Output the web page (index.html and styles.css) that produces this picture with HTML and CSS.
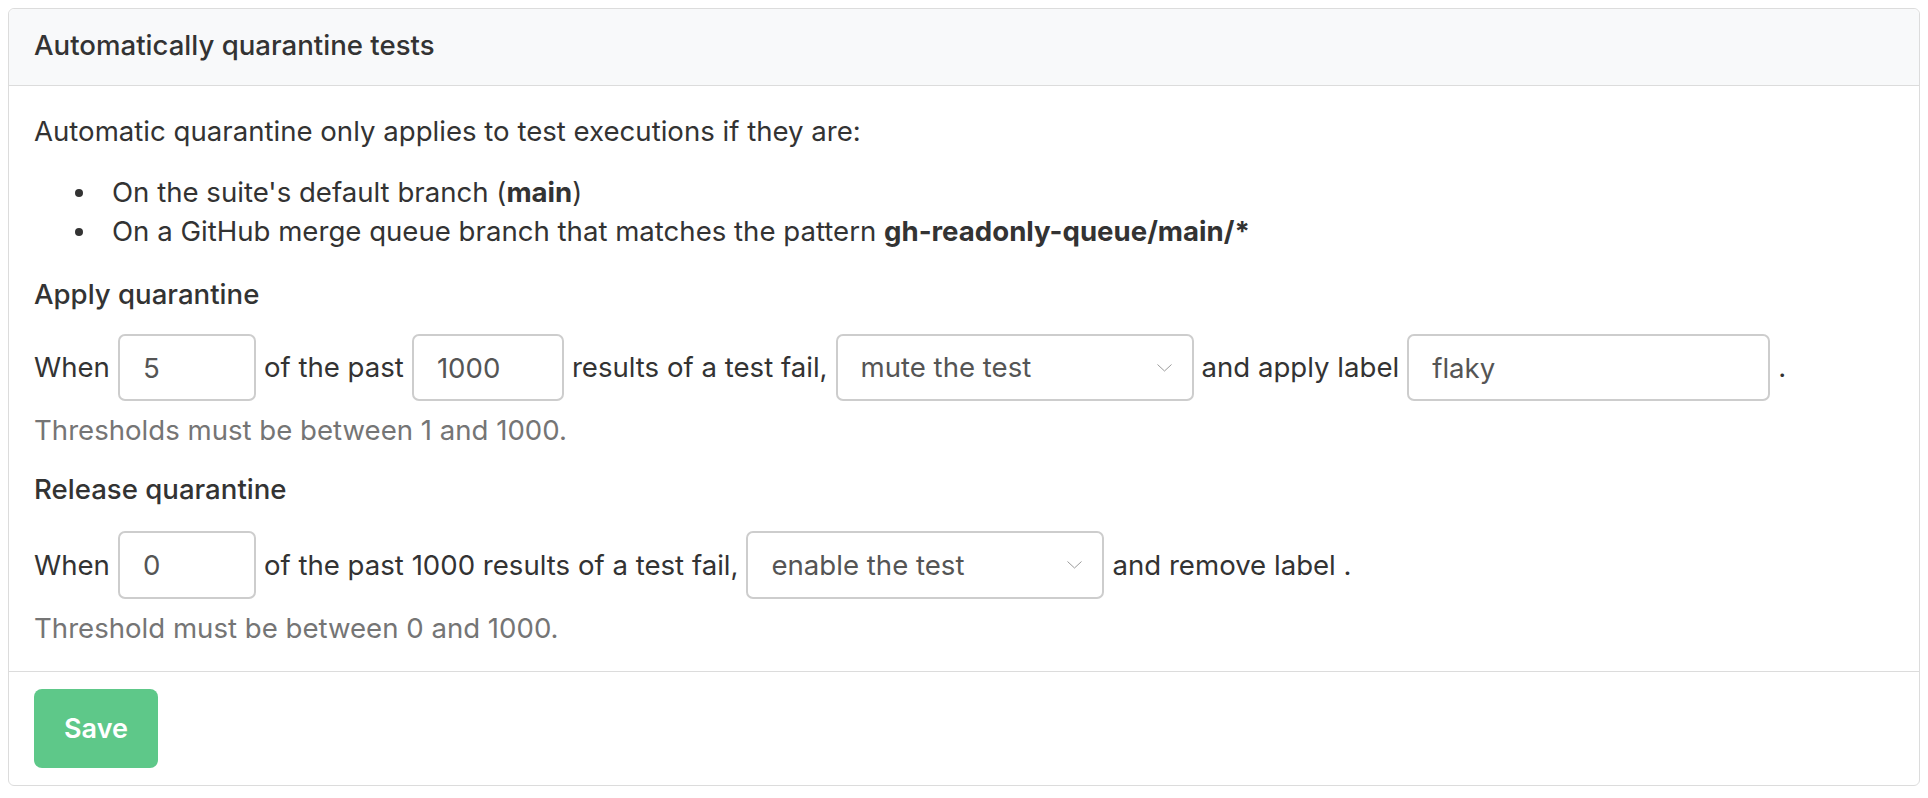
FILE: index.html
```html
<!DOCTYPE html>
<html lang="en">
<head>
<meta charset="utf-8">
<title>Automatically quarantine tests</title>
<link rel="stylesheet" href="styles.css">
</head>
<body>
<div class="card">
  <div class="card-header">Automatically quarantine tests</div>
  <div class="card-body">
    <p class="intro">Automatic quarantine only applies to test executions if they are:</p>
    <ul class="rules">
      <li>On the suite's default branch (<strong>main</strong>)</li>
      <li>On a GitHub merge queue branch that matches the pattern <strong>gh-readonly-queue/main/*</strong></li>
    </ul>
    <h3 class="section-title">Apply quarantine</h3>
    <div class="row">
      <span>When</span>
      <input class="field num-sm" type="text" value="5">
      <span>of the past</span>
      <input class="field num-md" type="text" value="1000">
      <span>results of a test fail,</span>
      <div class="select"><span>mute the test</span><svg class="chev" width="15" height="8" viewBox="0 0 15 8"><path d="M0.5 0.5 L7.5 7 L14.5 0.5" fill="none" stroke="#9a9a9a" stroke-width="1"/></svg></div>
      <span>and apply label</span>
      <input class="field label" type="text" value="flaky">
      <span class="dot">.</span>
    </div>
    <p class="help">Thresholds must be between 1 and 1000.</p>
    <h3 class="section-title release">Release quarantine</h3>
    <div class="row row-release">
      <span>When</span>
      <input class="field num-sm" type="text" value="0">
      <span>of the past 1000 results of a test fail,</span>
      <div class="select"><span>enable the test</span><svg class="chev" width="15" height="8" viewBox="0 0 15 8"><path d="M0.5 0.5 L7.5 7 L14.5 0.5" fill="none" stroke="#9a9a9a" stroke-width="1"/></svg></div>
      <span>and remove label .</span>
    </div>
    <p class="help">Threshold must be between 0 and 1000.</p>
  </div>
  <div class="card-footer">
    <button class="btn-save" type="button">Save</button>
  </div>
</div>
</body>
</html>
```

FILE: styles.css
```css
* { box-sizing: border-box; }
body {
  margin: 8px;
  background: #fff;
  font-family: "Inter", "Noto Sans", sans-serif;
  font-size: 27.6px;
  line-height: 39px;
  color: #333;
}
.card {
  border: 1px solid #dcdcdc;
  border-radius: 6px;
  height: 778px;
  display: flex;
  flex-direction: column;
}
.card-header {
  height: 77px;
  background: #f8f9fa;
  border-bottom: 1px solid #dcdcdc;
  border-radius: 6px 6px 0 0;
  padding: 0 25px 3px;
  display: flex;
  align-items: center;
  font-weight: 500;
}
.card-body {
  padding: 26px 25px 0;
  flex: 1;
}
.intro { margin: 0; }
.rules {
  margin: 22px 0 0;
  padding-left: 78px;
  list-style: none;
}
.rules li { position: relative; }
.rules li::before {
  content: "";
  position: absolute;
  left: -37px;
  top: 16px;
  width: 8px;
  height: 8px;
  border-radius: 50%;
  background: #333;
}
.section-title {
  margin: 24px 0 0;
  font-size: 27.6px;
  font-weight: 500;
  line-height: 39px;
}
.section-title.release { margin-top: 20px; }
.row {
  display: flex;
  align-items: center;
  gap: 8px;
  margin-top: 20px;
  height: 67px;
}
.row-release { margin-top: 22px; height: 68px; }
.field {
  height: 67px;
  border: 2px solid #cdcdcd;
  border-radius: 7px;
  padding: 0 23px;
  font-family: inherit;
  font-size: 27.6px;
  color: #555;
  background: #fff;
}
.row-release .field, .row-release .select { height: 68px; }
.num-sm { width: 138px; }
.num-md { width: 152px; }
.label { width: 363px; }
.select {
  width: 358px;
  height: 67px;
  border: 2px solid #cdcdcd;
  border-radius: 7px;
  padding: 0 20px 0 23px;
  display: flex;
  align-items: center;
  justify-content: space-between;
  color: #555;
}
.help {
  margin: 10px 0 0;
  color: #757575;
}
.card-footer {
  border-top: 1px solid #dcdcdc;
  height: 114px;
  padding: 17px 25px 0;
}
.btn-save {
  width: 124px;
  height: 79px;
  border: none;
  border-radius: 8px;
  background: #5ec889;
  color: #fff;
  font-family: inherit;
  font-size: 27px;
  font-weight: 600;
}
```
